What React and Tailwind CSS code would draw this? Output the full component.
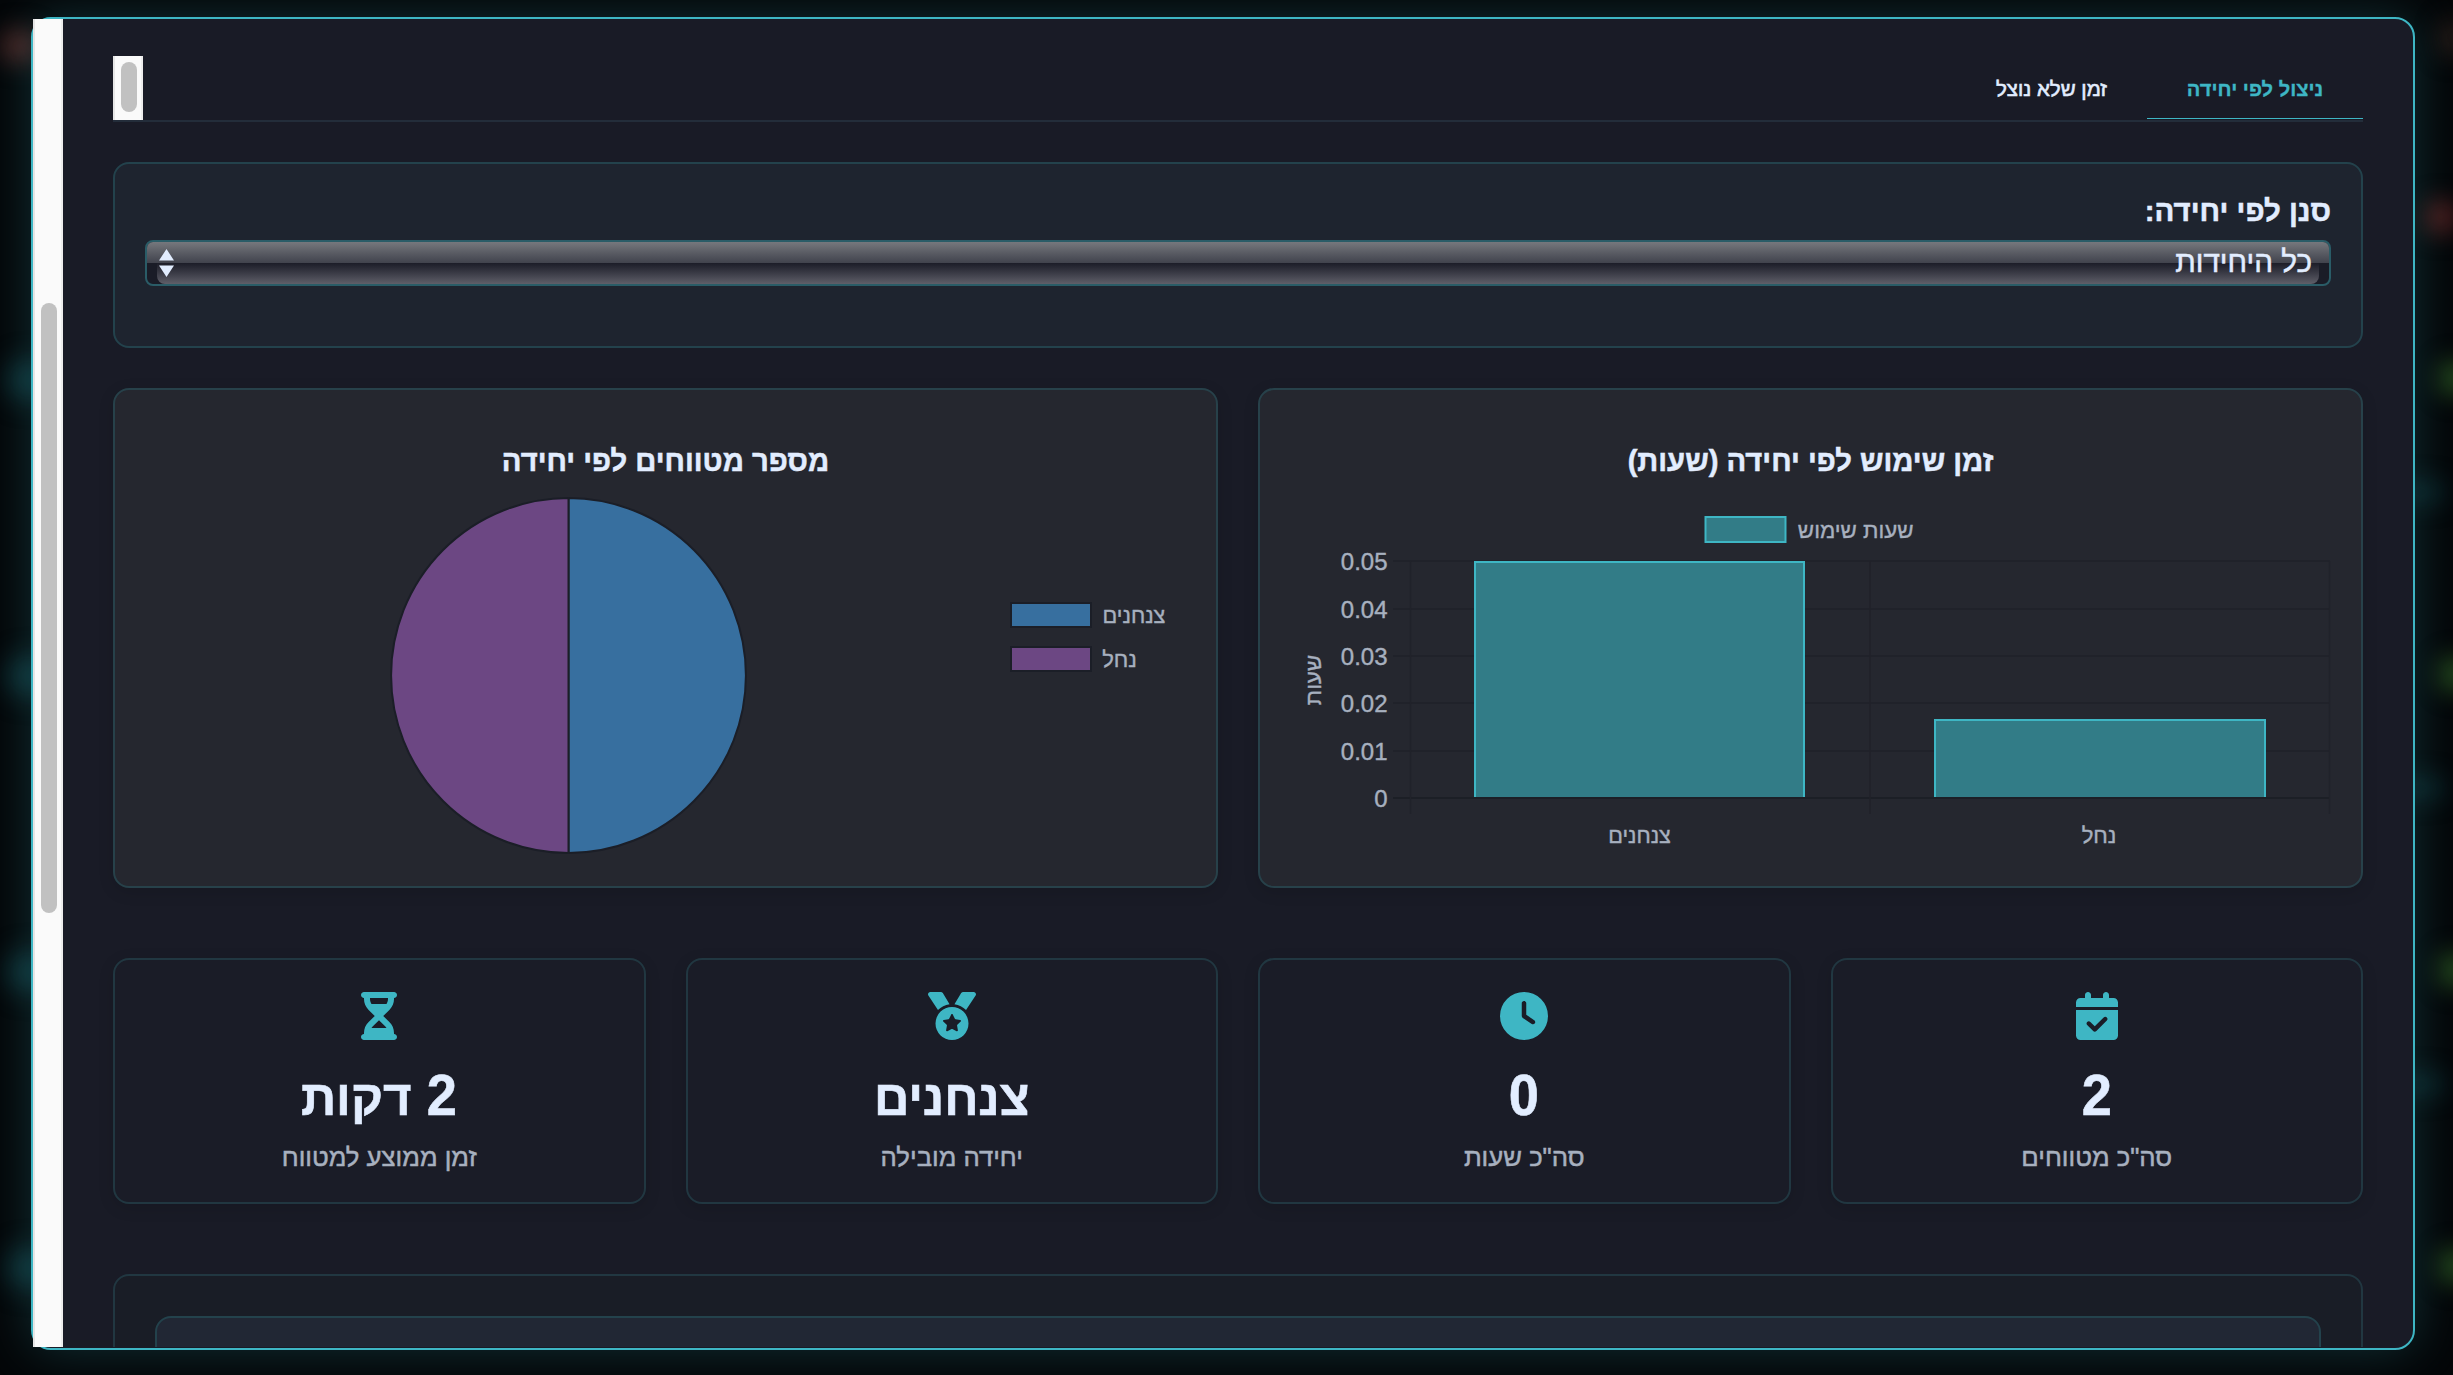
import { FaCalendarCheck, FaClock, FaMedal, FaHourglassHalf } from 'react-icons/fa6';

const GLOWS = [
  { x: 20, y: 46, w: 40, h: 32, c: '#4a2422' },
  { x: 28, y: 380, w: 44, h: 44, c: '#0c2c31' },
  { x: 28, y: 676, w: 44, h: 44, c: '#0c2c31' },
  { x: 28, y: 972, w: 44, h: 44, c: '#0c2c31' },
  { x: 28, y: 1268, w: 44, h: 44, c: '#0c2c31' },
  { x: 2453, y: 38, w: 24, h: 36, c: '#2a1d18' },
  { x: 2441, y: 217, w: 34, h: 34, c: '#4f1d1d' },
  { x: 2457, y: 378, w: 36, h: 36, c: '#24481c' },
  { x: 2457, y: 674, w: 36, h: 36, c: '#24481c' },
  { x: 2457, y: 970, w: 36, h: 36, c: '#24481c' },
  { x: 2457, y: 1266, w: 36, h: 36, c: '#24481c' },
  { x: 2420, y: 492, w: 50, h: 18, c: '#09252a' },
  { x: 2420, y: 788, w: 50, h: 18, c: '#09252a' },
  { x: 2420, y: 1084, w: 50, h: 18, c: '#09252a' },
];

const STATS = [
  { Icon: FaCalendarCheck, num: '2', word: '', label: 'סה"כ מטווחים' },
  { Icon: FaClock, num: '0', word: '', label: 'סה"כ שעות' },
  { Icon: FaMedal, num: '', word: 'צנחנים', label: 'יחידה מובילה' },
  { Icon: FaHourglassHalf, num: '2', word: 'דקות', label: 'זמן ממוצע למטווח' },
];

const TICKS = [
  { y: 561, label: '0.05' },
  { y: 609, label: '0.04' },
  { y: 656, label: '0.03' },
  { y: 703, label: '0.02' },
  { y: 751, label: '0.01' },
  { y: 798, label: '0' },
];

function Backdrop() {
  return (
    <div className="absolute inset-0 overflow-hidden">
      {GLOWS.map((g, i) => (
        <div
          key={i}
          className="absolute -translate-x-1/2 -translate-y-1/2 rounded-full blur-[12px]"
          style={{ left: g.x, top: g.y, width: g.w, height: g.h, background: g.c }}
        />
      ))}
    </div>
  );
}

function Scrollbar({ className, thumb }) {
  return (
    <div dir="ltr" className={`w-[30px] shrink-0 border-l-2 border-r-2 border-l-[#e6e6e6] border-r-[#ededed] bg-[#fafafa] pl-1.5 ${className}`}>
      <div className={`w-4 rounded-full bg-[#c1c1c1] ${thumb}`} />
    </div>
  );
}

function Tabs() {
  return (
    <div dir="rtl" className="flex h-[66px] items-end justify-between border-b-2 border-[#232d3a]">
      <div className="flex items-end text-[20.1px] leading-[24px]">
        <div className="mb-px flex h-[60px] w-[216px] items-center justify-center border-b border-[#3eb6c4] font-bold text-[#3eb6c4] [-webkit-text-stroke:0.3px_#3eb6c4]">
          ניצול לפי יחידה
        </div>
        <div className="mb-px flex h-[60px] items-center border-b border-transparent px-10 text-[20.5px] text-[#e2edff] [-webkit-text-stroke:0.6px_#e2edff]">
          זמן שלא נוצל
        </div>
      </div>
      <Scrollbar className="h-16 pt-1.5" thumb="h-[50px]" />
    </div>
  );
}

function Filter() {
  return (
    <div dir="rtl" className="mt-10 h-[186px] rounded-2xl border-2 border-[#23424c] bg-[#1e242f] px-[30px] pt-[27px]">
      <div className="text-[29.4px] leading-[40px] font-bold text-[#e2edff] [-webkit-text-stroke:0.5px_#e2edff]">סנן לפי יחידה:</div>
      <div className="relative mt-[9px] flex h-[46px] items-center justify-between overflow-hidden rounded-lg border-2 border-[#2a5c67] bg-[#1a1c27] pr-[17px] pl-3">
        <div className="absolute inset-x-0 top-0 h-[21px] bg-linear-to-b from-[#76787d] to-[#41434d]" />
        <div className="absolute inset-x-2.5 bottom-0 h-[21px] rounded-b-lg bg-linear-to-b from-[#1c1d28] to-[#5f5f69]" />
        <span className="relative -top-px text-[29.7px] leading-[40px] text-[#e2edff] [-webkit-text-stroke:0.5px_#e2edff]">כל היחידות</span>
        <svg className="relative" width="15" height="28" viewBox="0 0 15 28" fill="#e2edff">
          <path d="M0 11.5 7.5 0 15 11.5ZM0 16.5h15L7.5 28Z" />
        </svg>
      </div>
    </div>
  );
}

function ChartCard({ title, children }) {
  return (
    <div className="h-[500px] rounded-2xl border-2 border-[#27414a] bg-[#25272f] pt-[51px] shadow-[0_4px_16px_rgba(0,0,0,0.12)]">
      <div dir="rtl" className="text-center text-[29.2px] leading-[40px] font-bold text-[#e2edff] [-webkit-text-stroke:0.5px_#e2edff]">
        {title}
      </div>
      {children}
    </div>
  );
}

function BarChart() {
  return (
    <svg dir="ltr" className="block [direction:ltr]" width="1101" height="405" viewBox="1260 481 1101 405" fill="#a7b0bf">
      <rect x="1705.5" y="517" width="80" height="25" fill="#327c87" stroke="#3eb6c4" strokeWidth="2" />
      {TICKS.map((t) => (
        <path key={t.label} d={`M1393 ${t.y}H2330`} stroke={t.label === '0' ? '#1c1f26' : '#20222a'} strokeWidth="2" />
      ))}
      <path d="M1410.5 561V814M1870 561V814M2329.5 561V814" stroke="#20222a" strokeWidth="1.5" />
      <path d="M1474 561h331v236h-331ZM1934 719h332v78h-332Z" fill="#327c87" />
      <path d="M1475 797V562H1804V797M1935 797V720H2265V797" fill="none" stroke="#3eb6c4" strokeWidth="2" />
      <g stroke="#a7b0bf" strokeWidth="0.4">
        {TICKS.map((t) => (
          <text key={t.label} x="1387.5" y={t.y + 9} fontSize="24" textAnchor="end">{t.label}</text>
        ))}
        <text x="1855.7" y="538" fontSize="22.3" textAnchor="middle">שעות שימוש</text>
        <text x="1639.5" y="843" fontSize="21.6" textAnchor="middle">צנחנים</text>
        <text x="2099" y="843" fontSize="22" textAnchor="middle">נחל</text>
        <text transform="translate(1321 680) rotate(-90)" fontSize="22.3" textAnchor="middle">שעות</text>
      </g>
    </svg>
  );
}

function PieChart() {
  return (
    <svg className="block" width="1101" height="405" viewBox="115 481 1101 405" fill="#a7b0bf">
      <g stroke="#1b1e27" strokeWidth="2">
        <path d="M568.5 498A177.5 177.5 0 0 1 568.5 853Z" fill="#376f9f" />
        <path d="M568.5 498A177.5 177.5 0 0 0 568.5 853Z" fill="#6c4783" />
        <rect x="1011" y="603" width="80" height="24" fill="#376f9f" />
        <rect x="1011" y="647" width="80" height="24" fill="#6c4783" />
      </g>
      <g stroke="#a7b0bf" strokeWidth="0.4">
        <text x="1134" y="623" fontSize="21.7" textAnchor="middle">צנחנים</text>
        <text x="1119.5" y="667" fontSize="22" textAnchor="middle">נחל</text>
      </g>
    </svg>
  );
}

function StatCard({ Icon, num, word, label }) {
  return (
    <div className="flex h-[246px] flex-col items-center rounded-2xl border-2 border-[#213741] bg-[#1a1c27] pt-8 shadow-[0_4px_16px_rgba(0,0,0,0.12)]">
      <Icon className="h-12 w-auto text-[#3eb6c4]" />
      <div dir="rtl" className="mt-[27px] h-14 text-[57px] leading-[56px] font-bold whitespace-nowrap text-[#e2edff] [-webkit-text-stroke:0.6px_#e2edff]">
        {num && <span className="inline-block scale-x-95">{num}</span>}
        {num && word && <span className="text-[52px]"> </span>}
        {word && <span className="text-[49px]">{word}</span>}
      </div>
      <div dir="rtl" className="mt-[18px] text-[25.7px] leading-8 text-[#a7b0bf] [-webkit-text-stroke:0.5px_#a7b0bf]">{label}</div>
    </div>
  );
}

export default function App() {
  return (
    <div className="relative h-[1375px] w-[2453px] overflow-hidden bg-[#040608] pt-[17px] pl-[31px] font-['Liberation_Sans',sans-serif]">
      <Backdrop />
      <div className="relative h-[1333px] w-[2384px] rounded-[20px] border-2 border-[#3eb6c4] bg-[#191b26] shadow-[0_0_50px_rgba(62,182,196,0.24)]">
        <div className="flex h-[1328px]">
          <Scrollbar className="h-[1328px] pt-[284px]" thumb="h-[610px]" />
          <div className="h-full flex-1 overflow-hidden px-[50px] pt-[37px]">
            <Tabs />
            <Filter />
            <div dir="rtl" className="mt-10 grid grid-cols-2 gap-10">
              <ChartCard title="זמן שימוש לפי יחידה (שעות)"><BarChart /></ChartCard>
              <ChartCard title="מספר מטווחים לפי יחידה"><PieChart /></ChartCard>
            </div>
            <div dir="rtl" className="mt-[70px] grid grid-cols-4 gap-10">
              {STATS.map((s) => <StatCard key={s.label} {...s} />)}
            </div>
            <div className="mt-[70px] h-[300px] rounded-2xl border-2 border-[#213741] bg-[#191d26] px-10 pt-10">
              <div className="h-[200px] rounded-2xl border-2 border-[#23424c] bg-[#212734]" />
            </div>
          </div>
        </div>
      </div>
    </div>
  );
}
